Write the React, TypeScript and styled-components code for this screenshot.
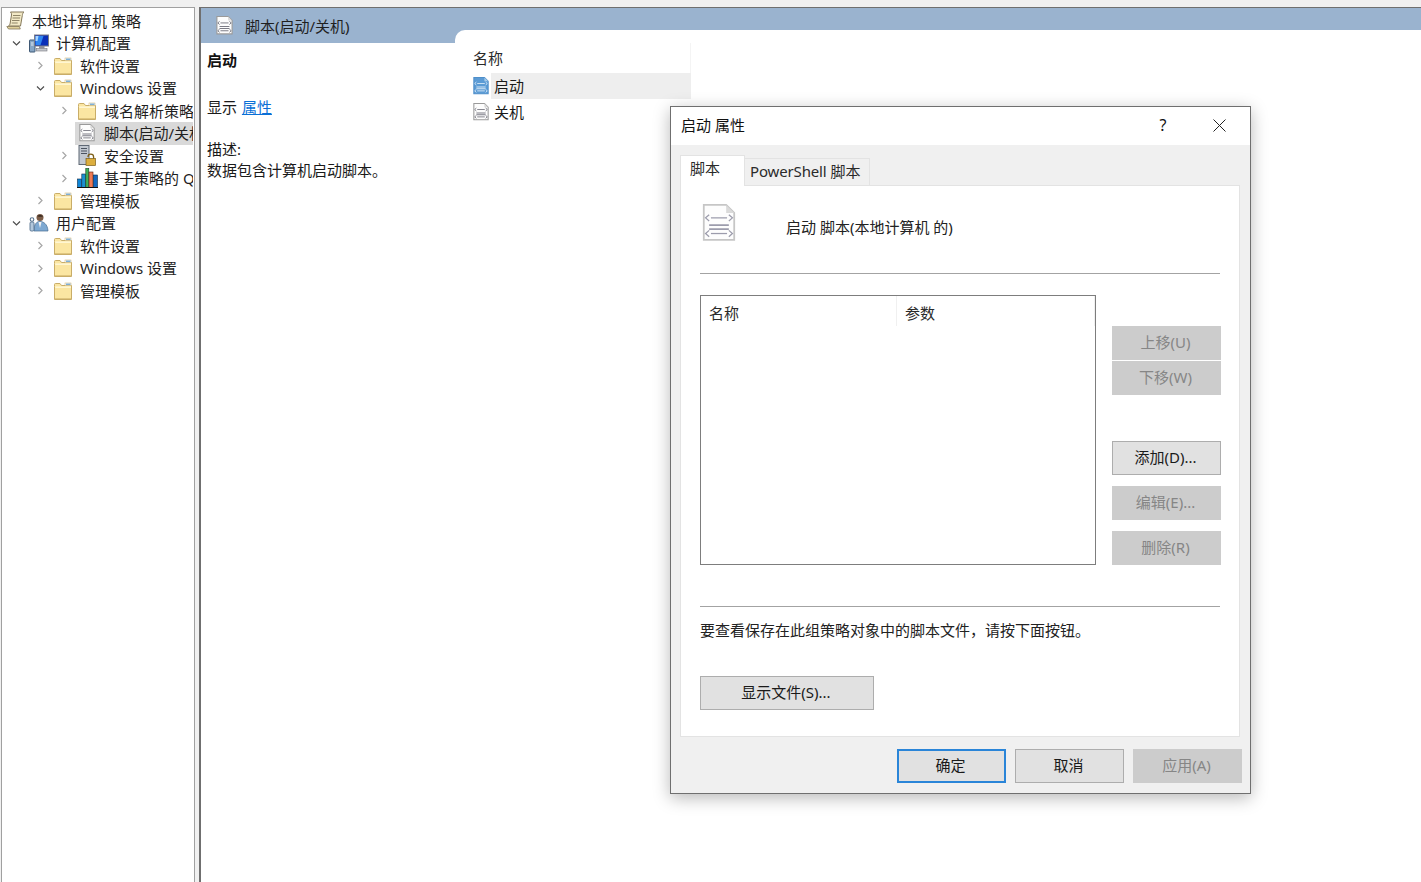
import React from "react";
import styled, { createGlobalStyle } from "styled-components";

const Global = createGlobalStyle`
  html, body { margin: 0; padding: 0; height: 100%; overflow: hidden; }
  body { font-family: "Noto Sans", "Noto Sans CJK SC", sans-serif; font-size: 15px; color: #1a1a1a; background: #f0f0f0; }
  svg { flex: none; display: block; }
`;

const Page = styled.div`
  position: relative;
  width: 1421px;
  height: 882px;
  box-sizing: border-box;
  padding: 7px 0 0 1px;
  display: flex;
  background: #f0f0f0;
  overflow: hidden;
`;

const Latin = styled.span`
  letter-spacing: -0.15px;
`;

const TreePanel = styled.nav`
  width: 194px;
  flex: none;
  box-sizing: border-box;
  padding: 1.5px 1px 0 0;
  background: #fff;
  border: 1px solid #a0a0a0;
  border-bottom: 0;
`;

const TreeRow = styled.div<{ $level: number }>`
  height: 22.5px;
  display: flex;
  align-items: center;
  padding-left: ${(p) => (p.$level === 0 ? 4 : (p.$level - 1) * 24 + 5)}px;
  white-space: nowrap;
  overflow: hidden;
  line-height: 22px;
`;

const Chevron = styled.span`
  width: 18px;
  height: 18px;
  flex: none;
  margin-right: 5px;
  display: flex;
  align-items: center;
  justify-content: center;
`;

const TreeIcon = styled.span`
  width: 18px;
  height: 18px;
  flex: none;
  display: flex;
  align-items: center;
  justify-content: center;
`;

const TreeLabel = styled.span`
  margin-left: 8px;
  color: #1f1f1f;
`;

const SelectedWrap = styled.div`
  flex: 1;
  min-width: 0;
  margin-left: -3px;
  padding-left: 3px;
  height: 23px;
  display: flex;
  align-items: center;
  background: #d9d9d9;
  overflow: hidden;
`;

const MainPanel = styled.main`
  margin-left: 4px;
  flex: 1;
  min-width: 0;
  display: flex;
  border-top: 1px solid #6f6f6f;
  border-left: 2px solid #6f6f6f;
  background: #fff;
`;

const InfoColumn = styled.section`
  width: 254px;
  flex: none;
`;

const InfoHeader = styled.header`
  height: 35px;
  background: #9ab3cf;
  display: flex;
  align-items: center;
  padding-left: 15px;
  gap: 12px;
  color: #1f1f1f;
`;

const InfoBody = styled.div`
  padding: 6px 0 0 6px;
  line-height: 22px;
`;

const InfoTitle = styled.div`
  font-weight: 700;
  margin-bottom: 24px;
  height: 23px;
  line-height: 23px;
  color: #111;
`;

const InfoLine = styled.div<{ $gap?: number }>`
  margin-top: ${(p) => p.$gap ?? 0}px;
  height: 22px;
`;

const DescText = styled.div`
  margin-top: -1px;
  height: 22px;
`;

const Link = styled.a`
  margin-left: 1px;
  color: #0a6fd6;
  text-decoration: underline;
`;

const ListColumn = styled.section`
  flex: 1;
  min-width: 0;
  display: flex;
  flex-direction: column;
  background: #9ab3cf;
  padding-top: 22px;
`;

const ListPane = styled.div`
  flex: 1;
  background: #fff;
  border-top-left-radius: 10px;
  padding: 13px 0 0 18px;
`;

const ListHead = styled.div`
  width: 218px;
  height: 30px;
  line-height: 30px;
  box-sizing: border-box;
  border-right: 1px solid #f4f4f4;
  color: #2a2a2a;
`;

const ListRow = styled.div`
  width: 218px;
  height: 26px;
  display: flex;
  align-items: center;
  gap: 2px;
`;

const ListLabel = styled.span<{ $active?: boolean }>`
  flex: 1;
  height: 26px;
  line-height: 26px;
  padding-left: 3px;
  background: ${(p) => (p.$active ? "#eeeeee" : "transparent")};
`;

const Dialog = styled.div`
  position: absolute;
  left: 670px;
  top: 106px;
  width: 581px;
  height: 688px;
  box-sizing: border-box;
  background: #f0f0f0;
  border: 1px solid #6f6f6f;
  box-shadow: 0 4px 16px rgba(0, 0, 0, 0.28);
  display: flex;
  flex-direction: column;
`;

const TitleBar = styled.div`
  height: 38px;
  flex: none;
  background: #fff;
  display: flex;
  align-items: center;
  padding: 0 2px 0 10px;
  color: #111;
`;

const TitleText = styled.span`
  flex: 1;
  margin-bottom: 4px;
`;

const TitleButton = styled.span<{ $w: number }>`
  width: ${(p) => p.$w}px;
  height: 36px;
  margin-bottom: 2px;
  display: flex;
  align-items: center;
  justify-content: center;
  font-size: 16px;
`;

const DialogBody = styled.div`
  flex: 1;
  padding: 10px 10px 0 9px;
  display: flex;
  flex-direction: column;
`;

const Tabs = styled.div`
  height: 31px;
  display: flex;
  align-items: flex-end;
  position: relative;
  z-index: 1;
  margin-bottom: -1px;
`;

const Tab = styled.div<{ $active?: boolean }>`
  box-sizing: border-box;
  height: ${(p) => (p.$active ? 31 : 28)}px;
  padding: ${(p) => (p.$active ? "0 10px 4px 9px" : "0 9px 0 5px")};
  line-height: ${(p) => (p.$active ? 25 : 24)}px;
  width: ${(p) => (p.$active ? "65px" : "125px")};
  background: ${(p) => (p.$active ? "#fff" : "#f0f0f0")};
  border: 1px solid #e3e3e3;
  border-bottom: ${(p) => (p.$active ? "0" : "1px solid #e3e3e3")};
  border-left: ${(p) => (p.$active ? "1px solid #e3e3e3" : "0")};
  white-space: nowrap;
  color: #2a2a2a;
`;

const TabPanel = styled.div`
  width: 560px;
  height: 552px;
  box-sizing: border-box;
  background: #fff;
  border: 1px solid #e3e3e3;
  padding: 0 19px;
`;

const PanelHead = styled.div`
  height: 87px;
  display: flex;
  align-items: flex-start;
`;

const PanelIcon = styled.span`
  width: 38px;
  height: 42px;
  margin: 18px 0 0 2px;
  flex: none;
`;

const PanelHeadText = styled.span`
  margin: 30px 0 0 46px;
  line-height: 22px;
  color: #222;
`;

const Rule = styled.hr<{ $top?: number }>`
  margin: ${(p) => p.$top ?? 0}px 0 0;
  height: 1px;
  border: 0;
  background: #a3a3a3;
`;

const Middle = styled.div`
  margin-top: 21px;
  height: 270px;
  display: flex;
`;

const ScriptList = styled.div`
  width: 396px;
  box-sizing: border-box;
  border: 1px solid #7d7d7d;
  flex: none;
`;

const ScriptHead = styled.div`
  display: flex;
  height: 33px;
  color: #2a2a2a;
`;

const ScriptCol = styled.div<{ $w: number }>`
  width: ${(p) => p.$w}px;
  box-sizing: border-box;
  padding-left: 8px;
  height: 30px;
  line-height: 35px;
  border-right: 1px solid #f0f0f0;
`;

const Side = styled.div`
  margin-left: 16px;
  padding-top: 31px;
  display: flex;
  flex-direction: column;
`;

const Btn = styled.div<{ $disabled?: boolean; $default?: boolean; $w?: number; $top?: number }>`
  width: ${(p) => p.$w ?? 109}px;
  height: 34px;
  margin-top: ${(p) => p.$top ?? 0}px;
  padding: 0 2px 3px 0;
  box-sizing: border-box;
  flex: none;
  display: flex;
  align-items: center;
  justify-content: center;
  background: ${(p) => (p.$disabled ? "#cccccc" : "#e1e1e1")};
  color: ${(p) => (p.$disabled ? "#868686" : "#1a1a1a")};
  border: ${(p) =>
    p.$default ? "2px solid #2a85d8" : p.$disabled ? "1px solid #cccccc" : "1px solid #adadad"};
`;

const Note = styled.p`
  margin: 12px 0 0;
  line-height: 22px;
  height: 22px;
  color: #222;
  white-space: nowrap;
`;

const Footer = styled.div`
  display: flex;
  padding: 12px 0 0 217px;
  gap: 9px;
`;

const Scroll = () => (
  <svg width="19" height="19" viewBox="0 0 19 19">
    <path d="M4.500 1h13.500c-1.200 1-1.500 2-1.700 3.500L14.500 15H2.500c1-.7 1.500-1.500 1.700-3L5.500 4c.1-1.300-.2-2.300-1-3z" fill="#f2e9c6" stroke="#85795a" strokeWidth="1" />
    <path d="M7 4.500h7.500M6.500 7h7.500M6 9.500h7.500M5.700 12h6" stroke="#8f8568" strokeWidth="1" />
    <path d="M.8 15.500h12.500l1 2.500H2.500z" fill="#dfd09a" stroke="#85795a" strokeWidth=".8" />
  </svg>
);

const Computer = () => (
  <svg width="20" height="19" viewBox="0 0 20 19">
    <rect x="0.500" y="6" width="5.500" height="12" rx=".5" fill="#86a5c4" stroke="#3f5874" strokeWidth="1" />
    <path d="M2 9h2.500M2 11h2.500" stroke="#e2ebf3" />
    <rect x="5.500" y="1" width="14" height="11" fill="#0a2fb8" stroke="#7b7d86" />
    <path d="M6.500 2h8l-3 9h-5z" fill="#2f86f0" />
    <path d="M6.500 2h3l-1 5h-2z" fill="#a9d6ff" />
    <rect x="10" y="12" width="5.500" height="2.500" fill="#8e9098" />
    <rect x="7.500" y="14.500" width="10.500" height="2.500" fill="#c4c6cc" stroke="#75777d" strokeWidth=".6" />
  </svg>
);

const Users = () => (
  <svg width="20" height="20" viewBox="0 0 20 20">
    <circle cx="11" cy="4.500" r="3.500" fill="#7b5c47" />
    <path d="M8 3c2-1.500 5-1.500 6 .5-2 .5-4 .5-6-.5z" fill="#3c2c22" />
    <path d="M5 18c0-7 2.500-9.500 6-9.500S18.500 11 19 18z" fill="#7ea9d2" stroke="#466b90" strokeWidth=".7" />
    <path d="M9.500 9h3l-1.500 6z" fill="#f4f4f4" />
    <rect x="1" y="9" width="4" height="9" rx="1.200" fill="#b3c8dc" stroke="#56728e" strokeWidth=".9" />
    <circle cx="3" cy="6.500" r="1.800" fill="none" stroke="#56728e" strokeWidth="1.100" />
  </svg>
);

const Folder = () => (
  <svg width="18" height="18" viewBox="0 0 18 18">
    <path d="M.5 4.500V2.500q0-1 1-1h4.500L7.500 3.500h10V17.500H.5z" fill="#fbe6a2" stroke="#c9ad68" strokeWidth="1" />
    <path d="M1.200 5.200h15.800" stroke="#fff6d2" strokeWidth="1.600" />
    <rect x="11" y="1" width="6" height="2.500" fill="#fff" stroke="#c9ad68" strokeWidth=".5" />
    <rect x="12" y="1.500" width="4.500" height="1.500" fill="#7fb0d6" />
    <path d="M1 16.500h16" stroke="#e0c67f" />
  </svg>
);

const LockServer = () => (
  <svg width="18" height="21" viewBox="0 0 18 21">
    <rect x="1" y="0.500" width="10" height="19" fill="#c2c8d0" stroke="#5f6874" />
    <path d="M3 3.500h6M3 6h6M3 8.500h6" stroke="#4b5360" />
    <path d="M10 12a2.800 2.800 0 0 1 5.600 0v2" fill="none" stroke="#7d5f1a" strokeWidth="1.300" />
    <rect x="8" y="13.500" width="9.500" height="7" fill="#dcae3e" stroke="#7d5f1a" strokeWidth=".7" />
  </svg>
);

const Bars = () => (
  <svg width="21" height="20" viewBox="0 0 21 20">
    <rect x="0.500" y="11" width="4" height="8.500" fill="#0e86d8" stroke="#0b2a4a" strokeWidth=".6" />
    <rect x="4.800" y="6" width="3.700" height="13.500" fill="#1c8fd0" stroke="#0b2a4a" strokeWidth=".6" />
    <rect x="8.800" y="0.500" width="3" height="19" fill="#3fb15a" stroke="#123c20" strokeWidth=".6" />
    <rect x="12" y="4" width="4" height="15.500" fill="#ef7b54" stroke="#5a2412" strokeWidth=".6" />
    <rect x="16.300" y="7" width="4.200" height="12.500" fill="#1468c0" stroke="#0b2a4a" strokeWidth=".6" />
    <path d="M0 19.500h21" stroke="#111" strokeWidth="1" />
  </svg>
);

const ScriptDoc = ({ size = 18, blue = false }: { size?: number; blue?: boolean }) => {
  const small = size < 24;
  const line = blue ? "#d6e7f6" : small ? "#7c7c86" : "#9c9cac";
  const thin = small ? 2.200 : 1.400;
  const thick = small ? 2.400 : 2;
  return (
    <svg width={size} height={size * (42 / 38)} viewBox="0 0 38 42">
      <path
        d="M2 1h25l9 9v30H2z"
        fill={blue ? "#5b9bd5" : "#fdfdfd"}
        stroke={blue ? "#4f8fca" : small ? "#9a9a9a" : "#c6c6c6"}
        strokeWidth={small ? 2.500 : 2}
      />
      <path d="M27 1v9h9z" fill={blue ? "#a6c9e8" : "#dadada"} />
      <path d="M8 12l-4 3.500 4 3.500M30 12l4 3.500-4 3.500" fill="none" stroke={line} strokeWidth={thin} />
      <path d="M10 15.500h18" stroke={line} strokeWidth={thin} />
      <path d="M8 23.500h22M8 28h22" stroke={line} strokeWidth={thick} />
      <path d="M8 29.500l-4 3.500 4 3.500M30 29.500l4 3.500-4 3.500" fill="none" stroke={line} strokeWidth={thin} />
      <path d="M10 33h18" stroke={line} strokeWidth={thin} />
    </svg>
  );
};

const ChevronIcon = ({ open }: { open: boolean }) => (
  <svg width="9" height="9" viewBox="0 0 9 9">
    <path
      d={open ? "M1 2.500l3.500 3.500L8 2.500" : "M2.500 1L6 4.500 2.500 8"}
      fill="none"
      stroke={open ? "#4d4d4d" : "#a6a6a6"}
      strokeWidth="1.200"
    />
  </svg>
);

type Node = { level: number; label: React.ReactNode; icon: React.ReactNode; open?: boolean; selected?: boolean };

const win = (
  <>
    <Latin>Windows</Latin> 设置
  </>
);

const tree: Node[] = [
  { level: 0, label: "本地计算机 策略", icon: <Scroll /> },
  { level: 1, label: "计算机配置", icon: <Computer />, open: true },
  { level: 2, label: "软件设置", icon: <Folder /> },
  { level: 2, label: win, icon: <Folder />, open: true },
  { level: 3, label: "域名解析策略", icon: <Folder /> },
  { level: 3, label: "脚本(启动/关机)", icon: <ScriptDoc size={16} />, selected: true },
  { level: 3, label: "安全设置", icon: <LockServer /> },
  { level: 3, label: "基于策略的 QoS", icon: <Bars /> },
  { level: 2, label: "管理模板", icon: <Folder /> },
  { level: 1, label: "用户配置", icon: <Users />, open: true },
  { level: 2, label: "软件设置", icon: <Folder /> },
  { level: 2, label: win, icon: <Folder /> },
  { level: 2, label: "管理模板", icon: <Folder /> },
];

export default function App() {
  return (
    <Page>
      <Global />
      <TreePanel>
        {tree.map((n, i) => (
          <TreeRow key={i} $level={n.level}>
            {n.level > 0 && !n.selected && (
              <Chevron>
                <ChevronIcon open={!!n.open} />
              </Chevron>
            )}
            {n.selected ? (
              <>
                <Chevron />
                <SelectedWrap>
                  <TreeIcon>{n.icon}</TreeIcon>
                  <TreeLabel>{n.label}</TreeLabel>
                </SelectedWrap>
              </>
            ) : (
              <>
                <TreeIcon>{n.icon}</TreeIcon>
                <TreeLabel>{n.label}</TreeLabel>
              </>
            )}
          </TreeRow>
        ))}
      </TreePanel>

      <MainPanel>
        <InfoColumn>
          <InfoHeader>
            <ScriptDoc size={17} />
            <span>脚本(启动/关机)</span>
          </InfoHeader>
          <InfoBody>
            <InfoTitle>启动</InfoTitle>
            <InfoLine>
              显示 <Link>属性</Link>
            </InfoLine>
            <InfoLine $gap={20}>描述:</InfoLine>
            <DescText>数据包含计算机启动脚本。</DescText>
          </InfoBody>
        </InfoColumn>
        <ListColumn>
          <ListPane>
            <ListHead>名称</ListHead>
            <ListRow>
              <ScriptDoc size={16} blue />
              <ListLabel $active>启动</ListLabel>
            </ListRow>
            <ListRow>
              <ScriptDoc size={16} />
              <ListLabel>关机</ListLabel>
            </ListRow>
          </ListPane>
        </ListColumn>
      </MainPanel>

      <Dialog>
        <TitleBar>
          <TitleText>启动 属性</TitleText>
          <TitleButton $w={54}>?</TitleButton>
          <TitleButton $w={58}>
            <svg width="13" height="13" viewBox="0 0 13 13">
              <path d="M.5.500l12 12M12.500.500l-12 12" stroke="#222" strokeWidth="1" />
            </svg>
          </TitleButton>
        </TitleBar>
        <DialogBody>
          <Tabs>
            <Tab $active>脚本</Tab>
            <Tab>
              <Latin>PowerShell</Latin> 脚本
            </Tab>
          </Tabs>
          <TabPanel>
            <PanelHead>
              <PanelIcon>
                <ScriptDoc size={34} />
              </PanelIcon>
              <PanelHeadText>启动 脚本(本地计算机 的)</PanelHeadText>
            </PanelHead>
            <Rule />
            <Middle>
              <ScriptList>
                <ScriptHead>
                  <ScriptCol $w={196}>名称</ScriptCol>
                  <ScriptCol $w={198}>参数</ScriptCol>
                </ScriptHead>
              </ScriptList>
              <Side>
                <Btn $disabled>上移(U)</Btn>
                <Btn $disabled $top={1}>下移(W)</Btn>
                <Btn $top={46}>添加(D)...</Btn>
                <Btn $disabled $top={11}>编辑(E)...</Btn>
                <Btn $disabled $top={11}>删除(R)</Btn>
              </Side>
            </Middle>
            <Rule $top={41} />
            <Note>要查看保存在此组策略对象中的脚本文件，请按下面按钮。</Note>
            <Btn $w={174} $top={35}>显示文件(S)...</Btn>
          </TabPanel>
          <Footer>
            <Btn $default>确定</Btn>
            <Btn>取消</Btn>
            <Btn $disabled>应用(A)</Btn>
          </Footer>
        </DialogBody>
      </Dialog>
    </Page>
  );
}
